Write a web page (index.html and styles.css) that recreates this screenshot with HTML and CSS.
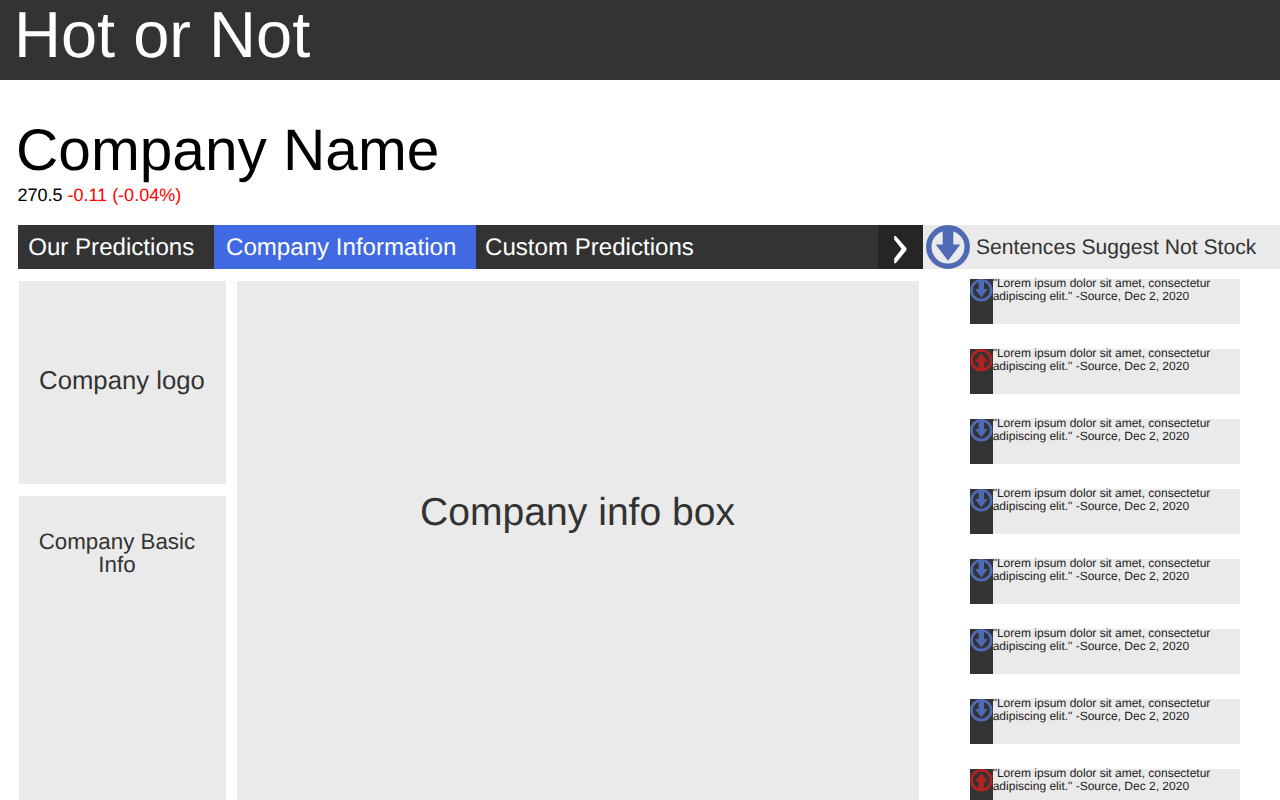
FILE: index.html
```html
<!DOCTYPE html>
<html lang="en">
<head>
<meta charset="utf-8">
<title>Hot or Not</title>
<link rel="stylesheet" href="styles.css">
</head>
<body>
<svg width="0" height="0" class="defs">
  <symbol id="down" viewBox="0 0 44 44">
    <circle cx="22" cy="22" r="19.2" fill="none" stroke="currentColor" stroke-width="5.4"/>
    <path d="M16.7 2H27.3V19.5H34.3L22 35.8L9.7 19.5H16.7Z" fill="currentColor"/>
  </symbol>
</svg>
<header class="topbar"><h1>Hot or Not</h1></header>
<section class="company">
  <h2>Company Name</h2>
  <p class="quote">270.5 <span class="loss">-0.11 (-0.04%)</span></p>
</section>
<div class="columns">
  <main class="main">
    <nav class="tabs">
      <a class="tab first">Our Predictions</a>
      <a class="tab active">Company Information</a>
      <a class="tab last">Custom Predictions</a>
      <a class="next"><svg width="45" height="44" viewBox="0 0 45 44"><path d="M16.2 11V14.6L23.6 24L16.2 33.6V38.2L17.8 38.2L28.4 25.2V23L17.8 11Z" fill="#fff"/></svg></a>
    </nav>
    <div class="panels">
      <div class="side">
        <div class="panel logo">Company logo</div>
        <div class="panel basic">Company Basic<br>Info</div>
      </div>
      <div class="panel info">Company info box</div>
    </div>
  </main>
  <aside class="feed">
    <div class="verdict"><svg class="big"><use href="#down"/></svg><span>Sentences Suggest Not Stock</span></div>
    <ul class="list">
      <li class="item"><div class="mark"><svg><use href="#down"/></svg></div><p>"Lorem ipsum dolor sit amet, consectetur<br>adipiscing elit." -Source, Dec 2, 2020</p></li>
      <li class="item"><div class="mark up"><svg><use href="#down"/></svg></div><p>"Lorem ipsum dolor sit amet, consectetur<br>adipiscing elit." -Source, Dec 2, 2020</p></li>
      <li class="item"><div class="mark"><svg><use href="#down"/></svg></div><p>"Lorem ipsum dolor sit amet, consectetur<br>adipiscing elit." -Source, Dec 2, 2020</p></li>
      <li class="item"><div class="mark"><svg><use href="#down"/></svg></div><p>"Lorem ipsum dolor sit amet, consectetur<br>adipiscing elit." -Source, Dec 2, 2020</p></li>
      <li class="item"><div class="mark"><svg><use href="#down"/></svg></div><p>"Lorem ipsum dolor sit amet, consectetur<br>adipiscing elit." -Source, Dec 2, 2020</p></li>
      <li class="item"><div class="mark"><svg><use href="#down"/></svg></div><p>"Lorem ipsum dolor sit amet, consectetur<br>adipiscing elit." -Source, Dec 2, 2020</p></li>
      <li class="item"><div class="mark"><svg><use href="#down"/></svg></div><p>"Lorem ipsum dolor sit amet, consectetur<br>adipiscing elit." -Source, Dec 2, 2020</p></li>
      <li class="item cut"><div class="mark up"><svg><use href="#down"/></svg></div><p>"Lorem ipsum dolor sit amet, consectetur<br>adipiscing elit." -Source, Dec 2, 2020</p></li>
    </ul>
  </aside>
</div>
</body>
</html>
```
FILE: styles.css
```css
* { box-sizing: border-box; margin: 0; padding: 0; }
html, body { height: 800px; overflow: hidden; }
body {
  display: flex;
  flex-direction: column;
  background: #fff;
  color: #333;
  font-family: "Liberation Sans", Arial, sans-serif;
  text-rendering: geometricPrecision;
}
h1, h2 { font-weight: 400; }
svg { display: block; }
.defs { display: none; }
.topbar { flex: none; height: 80px; background: #333; padding-left: 14px; }
.topbar h1 { color: #fff; font-size: 65px; line-height: 70px; }
.company { flex: none; height: 144.5px; padding: 37px 0 0 16px; color: #000; }
.company h2 { font-size: 58.6px; line-height: 68px; }
.quote { padding-left: 1.4px; font-size: 18px; line-height: 20px; }
.loss { color: #f00; }
.columns { display: flex; flex: 1; min-height: 0; }
.main { display: flex; flex-direction: column; width: 923px; padding-left: 17.7px; }
.tabs { display: flex; flex: none; height: 44.3px; background: #333; color: #fff; font-size: 24.1px; line-height: 46.5px; }
.tab { white-space: nowrap; }
.first { width: 196px; padding-left: 10.5px; }
.active { width: 262px; padding-left: 12.3px; background: #4169e1; }
.last { flex: 1; padding-left: 9.3px; }
.next { width: 45px; background: #252525; }
.panels { display: flex; flex: 1; min-height: 0; gap: 11px; padding: 12px 4px 0 1px; }
.side { display: flex; flex-direction: column; gap: 12px; width: 207.5px; }
.panel { background: #eaeaea; text-align: center; }
.logo { height: 203.5px; padding-right: 1px; font-size: 25.7px; line-height: 200px; }
.basic { flex: 1; padding: 34px 11px 0 0; font-size: 22.35px; line-height: 23px; }
.info { flex: 1; padding: 209px 1px 0 0; font-size: 39.1px; line-height: 46px; }
.feed { width: 357px; }
.verdict { display: flex; align-items: center; height: 44.3px; padding-left: 3px; gap: 6px; background: #eaeaea; font-size: 21.1px; white-space: nowrap; }
.verdict span { padding-top: 2px; }
.big { width: 44px; height: 44px; color: #4f69b5; }
.list { display: flex; flex-direction: column; gap: 25px; padding: 10.2px 40px 0 47px; list-style: none; }
.item { display: flex; flex: none; height: 45px; background: #eaeaea; color: #1c1c1c; }
.cut { height: 31px; }
.mark { width: 22.7px; background: #333; color: #4f69b5; }
.mark svg { width: 22.7px; height: 22.7px; }
.mark.up { color: #b22222; }
.up svg { transform: rotate(180deg); }
.item p { margin-top: -1.7px; font-size: 12px; line-height: 12.6px; white-space: nowrap; }
```
